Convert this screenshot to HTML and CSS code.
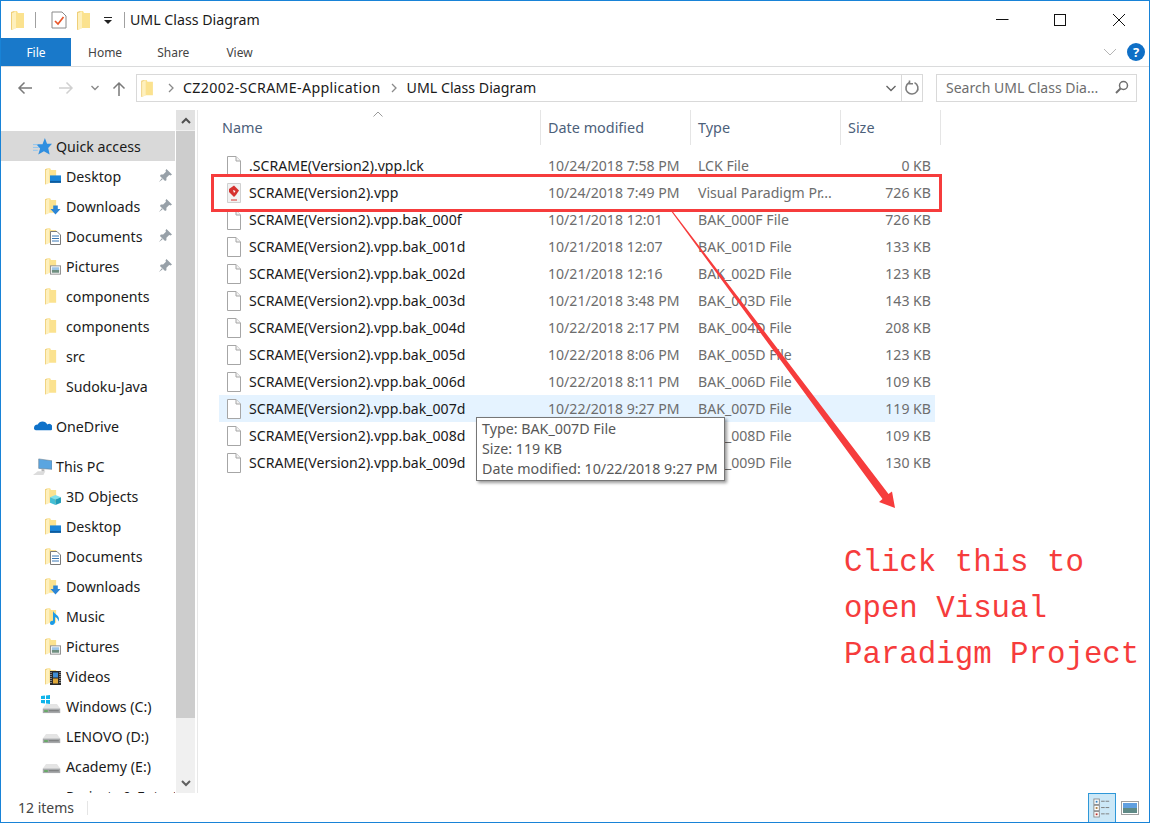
FILE: index.html
```html
<!DOCTYPE html>
<html>
<head>
  <meta charset="utf-8">
  <title>UML Class Diagram</title>
  <link rel="stylesheet" href="styles.css">
</head>
<body>
  <svg class="defs" width="0" height="0">
    <symbol id="folder" viewBox="0 0 14 20">
      <path d="M0 2 L3 1 L3 19 L0 20 Z" fill="#efcf78"/>
      <path d="M3 1 H6 L7 3 H13 V18 H3 Z" fill="#fbe28f"/>
      <path d="M1 3 L5 1.5 V18.5 L1 19.5 Z" fill="#fef0bd"/>
    </symbol>
    <symbol id="page" viewBox="0 0 16 20">
      <path d="M1.5 .5 H10 L14.5 5 V19.5 H1.5 Z" fill="#fff" stroke="#a6a6a6"/>
      <path d="M10 .5 V5 H14.5" fill="#f2f2f2" stroke="#a6a6a6"/>
    </symbol>
    <symbol id="pin" viewBox="0 0 14 14">
      <path d="M8 0 L14 6 L12.5 7 L11 6.5 L8 9.5 L8 12 L6.5 13 L1 7.5 L2 6 L4.5 6 L7.5 3 L7 1.5 Z M3 10 L0 14 L4 11 Z" fill="#97a0a8"/>
    </symbol>
    <symbol id="drive" viewBox="0 0 20 12">
      <path d="M4 1 H16 L19.5 6 H.5 Z" fill="#e4e4e4"/>
      <rect x=".5" y="6" width="19" height="5" fill="#a7a9ab"/>
      <rect x="2" y="8" width="4" height="1.5" fill="#4ea94b"/>
      <rect x="7" y="8" width="11" height="1" fill="#6d6f71"/>
    </symbol>
  </svg>

  <div class="window">
    <div class="titlebar">
      <svg class="ico-folder"><use href="#folder"/></svg>
      <span class="qa-sep"></span>
      <svg class="ico-check" viewBox="0 0 16 18">
        <path d="M1 1 H11 L15 5 V17 H1 Z" fill="#fff" stroke="#8a8a8a"/>
        <path d="M4 10 L7 13 L12.5 6" fill="none" stroke="#e8562a" stroke-width="1.7"/>
      </svg>
      <svg class="ico-folder ico-folder-2"><use href="#folder"/></svg>
      <svg class="ico-drop" viewBox="0 0 8 7"><path d="M0 0 H8 V1 H0 Z M0 3 H8 L4 7 Z" fill="#222"/></svg>
      <span class="qa-sep qa-sep-2"></span>
      <span class="title">UML Class Diagram</span>
      <div class="win-controls">
        <svg viewBox="0 0 14 14"><path d="M1 6.5 H13.5" stroke="#111" fill="none"/></svg>
        <svg viewBox="0 0 14 14"><rect x="1.5" y="1.5" width="11" height="11" stroke="#111" fill="none"/></svg>
        <svg viewBox="0 0 14 14"><path d="M1 1 L13 13 M13 1 L1 13" stroke="#111" fill="none"/></svg>
      </div>
    </div>

    <div class="tabs">
      <span class="tab tab-file">File</span>
      <span class="tab tab-home">Home</span>
      <span class="tab tab-share">Share</span>
      <span class="tab tab-view">View</span>
      <svg class="ribbon-toggle" viewBox="0 0 14 8"><path d="M1 1 L7 7 L13 1" fill="none" stroke="#b5b5b5"/></svg>
      <span class="help">?</span>
    </div>

    <div class="addressbar">
      <svg class="nav nav-back" viewBox="0 0 16 14"><path d="M15 7 H2 M7.5 1.5 L2 7 L7.5 12.5" fill="none" stroke="#7a7a7a" stroke-width="1.5"/></svg>
      <svg class="nav nav-fwd" viewBox="0 0 16 14"><path d="M1 7 H14 M8.5 1.5 L14 7 L8.5 12.5" fill="none" stroke="#d0d0d0" stroke-width="1.5"/></svg>
      <svg class="nav nav-down" viewBox="0 0 8 6"><path d="M.5 1 L4 4.5 L7.5 1" fill="none" stroke="#8a8a8a" stroke-width="1.4"/></svg>
      <svg class="nav nav-up" viewBox="0 0 14 16"><path d="M7 15 V2 M1.5 7.5 L7 2 L12.5 7.5" fill="none" stroke="#7a7a7a" stroke-width="1.5"/></svg>
      <div class="pathbox">
        <svg class="ico-folder"><use href="#folder"/></svg>
        <svg class="crumb-sep" viewBox="0 0 6 10"><path d="M1 1 L5 5 L1 9" fill="none" stroke="#8a8a8a" stroke-width="1.3"/></svg>
        <span class="crumb crumb-wide">CZ2002-SCRAME-Application</span>
        <svg class="crumb-sep" viewBox="0 0 6 10"><path d="M1 1 L5 5 L1 9" fill="none" stroke="#8a8a8a" stroke-width="1.3"/></svg>
        <span class="crumb">UML Class Diagram</span>
        <svg class="path-drop" viewBox="0 0 10 7"><path d="M.5 1 L5 5.5 L9.5 1" fill="none" stroke="#666" stroke-width="1.4"/></svg>
        <span class="refresh">
          <svg viewBox="0 0 16 16"><path d="M10.5 2.6 A6 6 0 1 1 5 2.8 M5.5 .5 V3.8 H9" fill="none" stroke="#7d7d7d" stroke-width="1.6"/></svg>
        </span>
      </div>
      <div class="searchbox">
        <span>Search UML Class Dia...</span>
        <svg viewBox="0 0 14 14"><circle cx="8.5" cy="5.5" r="4" fill="none" stroke="#6f6f6f" stroke-width="1.5"/><path d="M5.5 8.5 L1 13" stroke="#6f6f6f" stroke-width="2"/></svg>
      </div>
    </div>

    <div class="main">
      <div class="navpane">
        <div class="navlist">
          <div class="nav-item nav-root selected">
            <svg class="ni" viewBox="0 0 20 20"><path d="M12.5 1 L14.8 7.2 H20 L16 11.5 L17.5 18.5 L11.5 15 L5.5 18.500 L7.5 12 L3.5 7.5 H10 Z" fill="#2f8fe0"/><path d="M0 8 H5 M0 11 H6 M0 14 H5" stroke="#8cc4ef"/></svg>
            Quick access
          </div>
          <div class="nav-item nav-sub">
            <span class="fi"><svg class="fi-base"><use href="#folder"/></svg><svg class="fi-over" viewBox="0 0 12 10"><rect width="12" height="8" fill="#1b86d9"/><rect y="6" width="12" height="2" fill="#0c5a9e"/></svg></span>
            Desktop <svg class="pin"><use href="#pin"/></svg>
          </div>
          <div class="nav-item nav-sub">
            <span class="fi"><svg class="fi-base"><use href="#folder"/></svg><svg class="fi-over" viewBox="0 0 12 10"><path d="M3.500 0 H8.500 V4 H11.500 L6 10 L.5 4 H3.500 Z" fill="#2c86d6"/></svg></span>
            Downloads <svg class="pin"><use href="#pin"/></svg>
          </div>
          <div class="nav-item nav-sub">
            <span class="fi"><svg class="fi-base"><use href="#folder"/></svg><svg class="fi-over fi-tall" viewBox="0 0 11 14"><path d="M.5 .5 H7 L10.500 4 V13.500 H.5 Z" fill="#fff" stroke="#7a7a7a"/><path d="M2 5 H9 M2 7.500 H9 M2 10 H9" stroke="#3b78b5"/></svg></span>
            Documents <svg class="pin"><use href="#pin"/></svg>
          </div>
          <div class="nav-item nav-sub">
            <span class="fi"><svg class="fi-base"><use href="#folder"/></svg><svg class="fi-over" viewBox="0 0 12 10"><rect x=".5" y=".5" width="11" height="9" fill="#fff" stroke="#8b8b8b"/><rect x="2" y="2" width="8" height="3" fill="#9cc4e6"/><rect x="2" y="5" width="8" height="3" fill="#6f8f80"/></svg></span>
            Pictures <svg class="pin"><use href="#pin"/></svg>
          </div>
          <div class="nav-item nav-sub"><span class="fi"><svg class="fi-base"><use href="#folder"/></svg></span>components</div>
          <div class="nav-item nav-sub"><span class="fi"><svg class="fi-base"><use href="#folder"/></svg></span>components</div>
          <div class="nav-item nav-sub"><span class="fi"><svg class="fi-base"><use href="#folder"/></svg></span>src</div>
          <div class="nav-item nav-sub"><span class="fi"><svg class="fi-base"><use href="#folder"/></svg></span>Sudoku-Java</div>

          <div class="nav-item nav-root nav-group">
            <svg class="ni" viewBox="0 0 20 20"><path d="M1 12 A4 4 0 0 1 5 8 A5.500 5.500 0 0 1 15 8 A3.500 3.500 0 0 1 19 14 H3 A2.500 2.500 0 0 1 1 12 Z" fill="#0f72c9"/></svg>
            OneDrive
          </div>
          <div class="nav-item nav-root nav-group">
            <svg class="ni" viewBox="0 0 20 20"><path d="M6 2 L20 4 V13 L6 12 Z" fill="#5aa5e0" stroke="#6b7f90" stroke-width=".6"/><path d="M0 19 L5 15 H13 L11 19 Z" fill="#dcdcdc"/><path d="M9 12.500 V15 H12 V13 Z" fill="#b5b5b5"/></svg>
            This PC
          </div>
          <div class="nav-item nav-sub">
            <span class="fi"><svg class="fi-base"><use href="#folder"/></svg><svg class="fi-over" viewBox="0 0 12 11"><path d="M6 0 L12 2.500 L6 5 L0 2.500 Z" fill="#7fe0ee"/><path d="M0 2.500 L6 5 V11 L0 8.500 Z" fill="#43bfd6"/><path d="M12 2.500 L6 5 V11 L12 8.500 Z" fill="#1f9cb8"/></svg></span>
            3D Objects
          </div>
          <div class="nav-item nav-sub">
            <span class="fi"><svg class="fi-base"><use href="#folder"/></svg><svg class="fi-over" viewBox="0 0 12 10"><rect width="12" height="8" fill="#1b86d9"/><rect y="6" width="12" height="2" fill="#0c5a9e"/></svg></span>
            Desktop
          </div>
          <div class="nav-item nav-sub">
            <span class="fi"><svg class="fi-base"><use href="#folder"/></svg><svg class="fi-over fi-tall" viewBox="0 0 11 14"><path d="M.5 .5 H7 L10.500 4 V13.500 H.5 Z" fill="#fff" stroke="#7a7a7a"/><path d="M2 5 H9 M2 7.500 H9 M2 10 H9" stroke="#3b78b5"/></svg></span>
            Documents
          </div>
          <div class="nav-item nav-sub">
            <span class="fi"><svg class="fi-base"><use href="#folder"/></svg><svg class="fi-over" viewBox="0 0 12 10"><path d="M3.500 0 H8.500 V4 H11.500 L6 10 L.5 4 H3.500 Z" fill="#2c86d6"/></svg></span>
            Downloads
          </div>
          <div class="nav-item nav-sub">
            <span class="fi"><svg class="fi-base"><use href="#folder"/></svg><svg class="fi-over fi-tall" viewBox="0 0 11 14"><path d="M3 0 C4 3 9 4 9 8 C9 9 8.500 10 8 10.500 C8.500 7.500 6 6.500 5 6 V11 C5 13 3.500 14 2 14 C.5 14 0 13 0 12 C0 10.500 2 9.500 3 10 Z" fill="#1c9be6"/></svg></span>
            Music
          </div>
          <div class="nav-item nav-sub">
            <span class="fi"><svg class="fi-base"><use href="#folder"/></svg><svg class="fi-over" viewBox="0 0 12 10"><rect x=".5" y=".5" width="11" height="9" fill="#fff" stroke="#8b8b8b"/><rect x="2" y="2" width="8" height="3" fill="#9cc4e6"/><rect x="2" y="5" width="8" height="3" fill="#6f8f80"/></svg></span>
            Pictures
          </div>
          <div class="nav-item nav-sub">
            <span class="fi"><svg class="fi-base"><use href="#folder"/></svg><svg class="fi-over fi-tall" viewBox="0 0 11 14"><rect width="11" height="14" fill="#2a2a2a"/><rect x="3" y="1.500" width="5" height="5" fill="#3f8fd6"/><rect x="3" y="7.500" width="5" height="5" fill="#e0a93a"/><path d="M1 1 V13 M10 1 V13" stroke="#ddd" stroke-dasharray="1 1"/></svg></span>
            Videos
          </div>
          <div class="nav-item nav-drive">
            <span class="di"><svg class="di-win" viewBox="0 0 9 9"><path d="M0 1 L4 .5 V4 H0 Z M5 .4 L9 0 V4 H5 Z M0 5 H4 V8.500 L0 8 Z M5 5 H9 V9 L5 8.600 Z" fill="#10b4ea"/></svg><svg class="di-base"><use href="#drive"/></svg></span>
            Windows (C:)
          </div>
          <div class="nav-item nav-drive"><span class="di"><svg class="di-base"><use href="#drive"/></svg></span>LENOVO (D:)</div>
          <div class="nav-item nav-drive"><span class="di"><svg class="di-base"><use href="#drive"/></svg></span>Academy (E:)</div>
          <div class="nav-item nav-drive"><span class="di"></span>Projects &amp; Entert</div>
        </div>
        <div class="scrollbar">
          <div class="sb-btn sb-up"><svg viewBox="0 0 10 7"><path d="M1 6 L5 2 L9 6" fill="none" stroke="#505050" stroke-width="2"/></svg></div>
          <div class="sb-thumb"></div>
          <div class="sb-track"></div>
          <div class="sb-btn"><svg viewBox="0 0 10 7"><path d="M1 1 L5 5 L9 1" fill="none" stroke="#606060" stroke-width="2"/></svg></div>
        </div>
      </div>

      <div class="files">
        <div class="file-head">
          <span class="col-name">Name</span>
          <span>Date modified</span>
          <span>Type</span>
          <span>Size</span>
          <svg class="sort" viewBox="0 0 10 6"><path d="M.5 5.500 L5 1 L9.500 5.500" fill="none" stroke="#9a9a9a"/></svg>
        </div>
        <div class="file-row"><span class="file-name"><svg class="file-ico"><use href="#page"/></svg>.SCRAME(Version2).vpp.lck</span><span>10/24/2018 7:58 PM</span><span>LCK File</span><span class="file-size">0 KB</span></div>
        <div class="file-row"><span class="file-name">
          <svg class="file-ico" viewBox="0 0 16 20"><path d="M1.500 .5 H14.500 V19.500 H1.500 Z" fill="#f2f2f2" stroke="#d0d0d0"/><path d="M8 2.500 L13 7.500 L10 12 L8 14 L3 9 V6 Z" fill="#d5322f"/><path d="M7 7 L9.500 8 L8 10 Z" fill="#fff"/><path d="M5 17 H11" stroke="#d5322f"/></svg>
          SCRAME(Version2).vpp</span><span>10/24/2018 7:49 PM</span><span>Visual Paradigm Pr...</span><span class="file-size">726 KB</span></div>
        <div class="file-row"><span class="file-name"><svg class="file-ico"><use href="#page"/></svg>SCRAME(Version2).vpp.bak_000f</span><span>10/21/2018 12:01</span><span>BAK_000F File</span><span class="file-size">726 KB</span></div>
        <div class="file-row"><span class="file-name"><svg class="file-ico"><use href="#page"/></svg>SCRAME(Version2).vpp.bak_001d</span><span>10/21/2018 12:07</span><span>BAK_001D File</span><span class="file-size">133 KB</span></div>
        <div class="file-row"><span class="file-name"><svg class="file-ico"><use href="#page"/></svg>SCRAME(Version2).vpp.bak_002d</span><span>10/21/2018 12:16</span><span>BAK_002D File</span><span class="file-size">123 KB</span></div>
        <div class="file-row"><span class="file-name"><svg class="file-ico"><use href="#page"/></svg>SCRAME(Version2).vpp.bak_003d</span><span>10/21/2018 3:48 PM</span><span>BAK_003D File</span><span class="file-size">143 KB</span></div>
        <div class="file-row"><span class="file-name"><svg class="file-ico"><use href="#page"/></svg>SCRAME(Version2).vpp.bak_004d</span><span>10/22/2018 2:17 PM</span><span>BAK_004D File</span><span class="file-size">208 KB</span></div>
        <div class="file-row"><span class="file-name"><svg class="file-ico"><use href="#page"/></svg>SCRAME(Version2).vpp.bak_005d</span><span>10/22/2018 8:06 PM</span><span>BAK_005D File</span><span class="file-size">123 KB</span></div>
        <div class="file-row"><span class="file-name"><svg class="file-ico"><use href="#page"/></svg>SCRAME(Version2).vpp.bak_006d</span><span>10/22/2018 8:11 PM</span><span>BAK_006D File</span><span class="file-size">109 KB</span></div>
        <div class="file-row hovered"><span class="file-name"><svg class="file-ico"><use href="#page"/></svg>SCRAME(Version2).vpp.bak_007d</span><span>10/22/2018 9:27 PM</span><span>BAK_007D File</span><span class="file-size">119 KB</span></div>
        <div class="file-row"><span class="file-name"><svg class="file-ico"><use href="#page"/></svg>SCRAME(Version2).vpp.bak_008d</span><span>10/22/2018 9:27 PM</span><span>BAK_008D File</span><span class="file-size">109 KB</span></div>
        <div class="file-row"><span class="file-name"><svg class="file-ico"><use href="#page"/></svg>SCRAME(Version2).vpp.bak_009d</span><span>10/22/2018 9:27 PM</span><span>BAK_009D File</span><span class="file-size">130 KB</span></div>
      </div>
    </div>

    <div class="statusbar">
      <span class="count">12 items</span>
      <span class="status-sep"></span>
      <span class="view-btn active">
        <svg viewBox="0 0 20 22"><rect x="1" y="1" width="6" height="6" fill="#fff" stroke="#888"/><rect x="1" y="8" width="6" height="6" fill="#fff" stroke="#888"/><rect x="1" y="15" width="6" height="6" fill="#fff" stroke="#888"/><rect x="3" y="3" width="2" height="2" fill="#2f7fc0"/><rect x="3" y="10" width="2" height="2" fill="#a9793a"/><rect x="3" y="17" width="2" height="2" fill="#b8302a"/><path d="M9 3.500 H19 M9 10.500 H19 M9 17.500 H19" stroke="#777" stroke-dasharray="4 1"/></svg>
      </span>
      <span class="view-btn view-thumb">
        <svg viewBox="0 0 18 14"><rect x=".5" y=".5" width="17" height="13" fill="#fff" stroke="#a0a0a0"/><rect x="2" y="2" width="14" height="5" fill="#5f9fe0"/><rect x="2" y="7" width="14" height="5" fill="#5f8a86"/></svg>
      </span>
    </div>

    <div class="tooltip">
      <div>Type: BAK_007D File</div>
      <div>Size: 119 KB</div>
      <div>Date modified: 10/22/2018 9:27 PM</div>
    </div>

    <div class="callout-box"></div>
    <svg class="callout-arrow" width="1150" height="823" viewBox="0 0 1150 823">
      <path d="M671 211 L672 210.500 L888.500 494 L892 491.500 L895 508 L879 502 L882.500 499 Z" fill="#f63c3c"/>
    </svg>
    <div class="callout-text">Click this to<br>open Visual<br>Paradigm Project</div>
  </div>
</body>
</html>
```

FILE: styles.css
```css
* {
  box-sizing: border-box;
}

body {
  margin: 0;
  font-family: "Noto Sans", "Open Sans", sans-serif;
  font-size: 14px;
  color: #1a1a1a;
  background: white;
}

.defs {
  position: absolute;
}

.window {
  position: relative;
  width: 1150px;
  height: 823px;
  border: 1px solid #1883d7;
  display: flex;
  flex-direction: column;
  overflow: hidden;
  background: white;
}

/* title bar */

.titlebar {
  height: 37px;
  display: flex;
  align-items: center;
  flex-shrink: 0;
}

.ico-folder {
  width: 14px;
  height: 20px;
  margin-left: 10px;
}

.qa-sep {
  width: 1px;
  height: 16px;
  background: #a0a0a0;
  margin-left: 10px;
}

.ico-check {
  width: 16px;
  height: 18px;
  margin-left: 15px;
}

.ico-folder-2 {
  margin-left: 10px;
}

.ico-drop {
  width: 8px;
  height: 7px;
  margin-left: 13px;
  margin-top: 2px;
}

.qa-sep-2 {
  margin-left: 12px;
}

.title {
  margin-left: 5px;
  font-size: 14.2px;
}

.win-controls {
  margin-left: auto;
  display: flex;
  gap: 44px;
  padding-right: 23px;
}

.win-controls svg {
  width: 14px;
  height: 14px;
}

.win-controls svg:last-child {
  margin-left: 1px;
}

/* ribbon */

.tabs {
  height: 29px;
  display: flex;
  align-items: center;
  flex-shrink: 0;
  border-bottom: 1px solid #dadbdc;
  font-size: 12px;
  color: #444;
}

.tab {
  height: 28px;
  line-height: 30px;
}

.tab-file {
  width: 70px;
  background: #1979ca;
  color: white;
  text-align: center;
}

.tab-home {
  margin-left: 17px;
}

.tab-share {
  margin-left: 35px;
}

.tab-view {
  margin-left: 37px;
}

.ribbon-toggle {
  width: 14px;
  height: 8px;
  margin-left: auto;
}

.help {
  width: 18px;
  height: 18px;
  margin: 0 4px 0 10px;
  border-radius: 50%;
  background: #0f6fc6;
  color: white;
  font-size: 13px;
  font-weight: 700;
  line-height: 18px;
  text-align: center;
}

/* address bar */

.addressbar {
  height: 43px;
  display: flex;
  align-items: flex-start;
  flex-shrink: 0;
  padding-top: 7px;
}

.nav {
  flex-shrink: 0;
}

.nav-back {
  width: 16px;
  height: 14px;
  margin: 7px 0 0 16px;
}

.nav-fwd {
  width: 16px;
  height: 14px;
  margin: 7px 0 0 25px;
}

.nav-down {
  width: 8px;
  height: 6px;
  margin: 11px 0 0 17px;
}

.nav-up {
  width: 14px;
  height: 16px;
  margin: 7px 0 0 13px;
}

.pathbox {
  width: 787px;
  height: 28px;
  margin-left: 10px;
  border: 1px solid #d9d9d9;
  display: flex;
  align-items: center;
  font-size: 14.2px;
}

.pathbox .ico-folder {
  margin-left: 4px;
  width: 13px;
  height: 18px;
}

.crumb {
  padding-bottom: 2px;
}

.crumb-wide {
  letter-spacing: 0.35px;
}

.crumb-sep {
  width: 6px;
  height: 10px;
  margin: 0 9px 0 14px;
}

.crumb + .crumb-sep {
  margin: 0 10px 0 10px;
}

.path-drop {
  width: 10px;
  height: 7px;
  margin-left: auto;
  margin-right: 5px;
}

.refresh {
  width: 21px;
  height: 26px;
  border-left: 1px solid #d9d9d9;
  display: flex;
  align-items: center;
  justify-content: center;
}

.refresh svg {
  width: 16px;
  height: 16px;
}

.searchbox {
  width: 201px;
  height: 28px;
  margin-left: 13px;
  border: 1px solid #d9d9d9;
  display: flex;
  align-items: center;
  justify-content: space-between;
  padding: 0 7px 2px 9px;
  color: #6d6d6d;
  font-size: 14px;
}

.searchbox svg {
  width: 14px;
  height: 14px;
}

/* main area */

.main {
  flex: 1;
  min-height: 0;
  display: flex;
}

.navpane {
  width: 197px;
  flex-shrink: 0;
  display: flex;
  border-right: 1px solid #e8e8e8;
}

.navlist {
  width: 174px;
  padding-top: 21px;
  overflow: hidden;
}

.nav-item {
  height: 30px;
  display: flex;
  align-items: center;
  white-space: nowrap;
  font-size: 14.2px;
}

.nav-root {
  padding-left: 32px;
}

.nav-root .ni {
  width: 19px;
  height: 19px;
  margin-right: 4px;
}

.nav-group {
  margin-top: 10px;
}

.selected {
  background: #d9d9d9;
}

.nav-sub {
  padding-left: 44px;
  position: relative;
}

.fi {
  position: relative;
  width: 21px;
  height: 20px;
  flex-shrink: 0;
}

.fi-base {
  width: 12px;
  height: 20px;
}

.fi-over {
  position: absolute;
  left: 5px;
  bottom: 1px;
  width: 11px;
  height: 10px;
}

.fi-tall {
  height: 14px;
}

.pin {
  position: absolute;
  right: 3px;
  top: 8px;
  width: 13px;
  height: 13px;
}

.nav-drive {
  padding-left: 40px;
}

.di {
  position: relative;
  width: 25px;
  height: 16px;
  flex-shrink: 0;
}

.di-base {
  position: absolute;
  left: 1px;
  bottom: 0;
  width: 19px;
  height: 11px;
}

.di-win {
  position: absolute;
  left: 0;
  top: -3px;
  width: 9px;
  height: 9px;
}

.scrollbar {
  width: 19px;
  margin-left: 1px;
  display: flex;
  flex-direction: column;
  background: #f0f0f0;
}

.sb-btn {
  height: 20px;
  flex-shrink: 0;
  display: flex;
  align-items: center;
  justify-content: center;
  background: #f0f0f0;
}

.sb-up {
  background: #e2e2e2;
}

.sb-btn svg {
  width: 10px;
  height: 7px;
}

.sb-thumb {
  height: 587px;
  margin-top: 1px;
  background: #cdcdcd;
}

.sb-track {
  flex: 1;
}

/* file list */

.files {
  position: relative;
  margin-left: 21px;
}

.file-head {
  display: grid;
  grid-template-columns: 322px 150px 150px 100px;
  height: 35px;
  margin-bottom: 7px;
  color: #4c607a;
  font-size: 14.4px;
}

.file-head span {
  padding-left: 7px;
  line-height: 35px;
  border-right: 1px solid #e5e5e5;
}

.file-head .col-name {
  padding-left: 3px;
}

.sort {
  position: absolute;
  left: 154px;
  top: 1px;
  width: 10px;
  height: 6px;
}

.file-row {
  display: grid;
  grid-template-columns: 322px 150px 150px 94px;
  width: 716px;
  height: 27px;
  align-items: center;
  color: #6d6d6d;
  font-size: 14.1px;
  white-space: nowrap;
}

.file-row > span {
  padding-left: 7px;
}

.file-row .file-name {
  display: flex;
  align-items: center;
  color: #1a1a1a;
}

.file-ico {
  width: 16px;
  height: 20px;
  margin-right: 7px;
  flex-shrink: 0;
}

.file-row .file-size {
  text-align: right;
  padding-right: 4px;
}

.hovered {
  background: #e5f3ff;
}

/* status bar */

.statusbar {
  height: 29px;
  flex-shrink: 0;
  display: flex;
  align-items: center;
  background: white;
  color: #444;
  position: relative;
}

.count {
  margin-left: 17px;
  padding-bottom: 1px;
  font-size: 14px;
}

.status-sep {
  width: 1px;
  height: 14px;
  background: #e5e5e5;
  margin-left: 13px;
}

.view-btn {
  height: 29px;
  display: flex;
  align-items: center;
  justify-content: center;
}

.view-btn.active {
  width: 28px;
  margin-left: auto;
  background: #cce8f7;
  border: 1px solid #2f98d8;
  border-bottom: none;
}

.view-thumb {
  width: 18px;
  margin: 0 10px 0 5px;
}

.view-btn svg {
  width: 18px;
  height: 14px;
}

.view-btn.active svg {
  width: 18px;
  height: 20px;
}

/* tooltip and annotations */

.tooltip {
  position: absolute;
  left: 475px;
  top: 416px;
  width: 249px;
  height: 64px;
  padding: 1px 5px;
  border: 1px solid #767676;
  background: white;
  box-shadow: 2px 2px 3px rgba(0, 0, 0, 0.4);
  color: #575757;
  font-size: 14.25px;
  line-height: 20px;
  white-space: nowrap;
}

.callout-box {
  position: absolute;
  left: 210px;
  top: 173px;
  width: 731px;
  height: 38px;
  border: 3px solid #f63c3c;
}

.callout-arrow {
  position: absolute;
  left: -1px;
  top: -1px;
}

.callout-text {
  position: absolute;
  left: 843px;
  top: 539px;
  font-family: "Liberation Mono", monospace;
  font-size: 30.75px;
  line-height: 46px;
  color: #f63c3c;
  white-space: nowrap;
}
```
